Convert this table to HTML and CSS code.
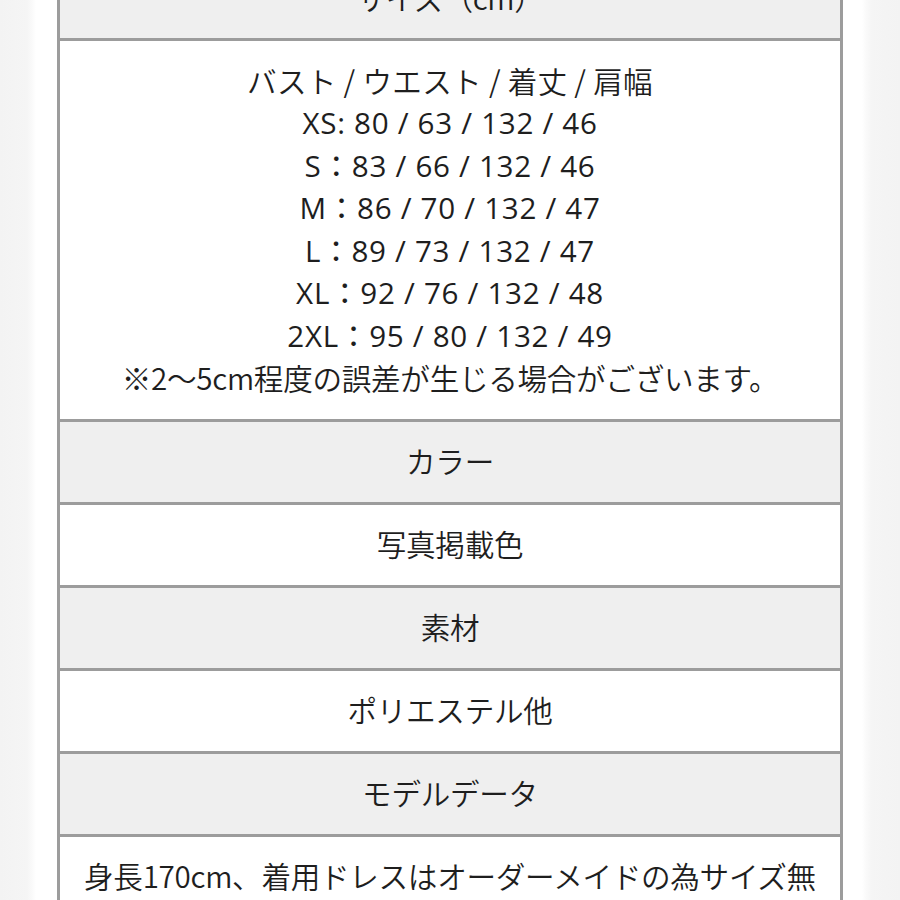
FILE: index.html
```html
<!DOCTYPE html>
<html lang="ja">
<head>
<meta charset="utf-8">
<title>商品詳細</title>
<link rel="stylesheet" href="styles.css">
</head>
<body>
<div class="sheet">
  <div class="cell head ja">サイズ（cm）</div>
  <div class="cell body">
    <div class="line ja wide">バスト / ウエスト / 着丈 / 肩幅</div>
    <div class="line size">XS: 80 / 63 / 132 / 46</div>
    <div class="line size">S：83 / 66 / 132 / 46</div>
    <div class="line size">M：86 / 70 / 132 / 47</div>
    <div class="line size">L：89 / 73 / 132 / 47</div>
    <div class="line size">XL：92 / 76 / 132 / 48</div>
    <div class="line size">2XL：95 / 80 / 132 / 49</div>
    <div class="line ja">※2〜5cm程度の誤差が生じる場合がございます。</div>
  </div>
  <div class="cell head ja">カラー</div>
  <div class="cell body ja">写真掲載色</div>
  <div class="cell head ja">素材</div>
  <div class="cell body ja">ポリエステル他</div>
  <div class="cell head ja">モデルデータ</div>
  <div class="cell body ja">身長170cm、着用ドレスはオーダーメイドの為サイズ無<br>しとなります。</div>
</div>
</body>
</html>
```
FILE: styles.css
```css
html, body {
  margin: 0;
  padding: 0;
}
body {
  background: linear-gradient(to right,
    #f3f3f3 0, #f5f5f5 27px, #fafafa 32px, #ffffff 36px,
    #ffffff 862px, #fafafa 866px, #f5f5f5 872px, #f3f3f3 900px);
  min-height: 900px;
  font-family: "Open Sans", "Noto Sans CJK JP", sans-serif;
  color: #1e1e1e;
  overflow: hidden;
}
.sheet {
  width: 780px;
  margin: -45px auto 0;
  border-left: 3px solid #9c9c9c;
  border-right: 3px solid #9c9c9c;
}
.cell {
  border-top: 3px solid #9c9c9c;
  padding: 18.75px 16px;
  font-size: 29.6px;
  font-weight: 400;
  line-height: 42.5px;
  text-align: center;
  white-space: nowrap;
}
.head {
  background: #efefef;
}
.body {
  background: #ffffff;
}
.ja {
  font-family: "Noto Sans CJK JP", sans-serif;
  font-weight: 350;
  letter-spacing: -0.3px;
}
.ja.wide {
  letter-spacing: 0.3px;
}
.size {
  letter-spacing: 0.7px;
}
```
